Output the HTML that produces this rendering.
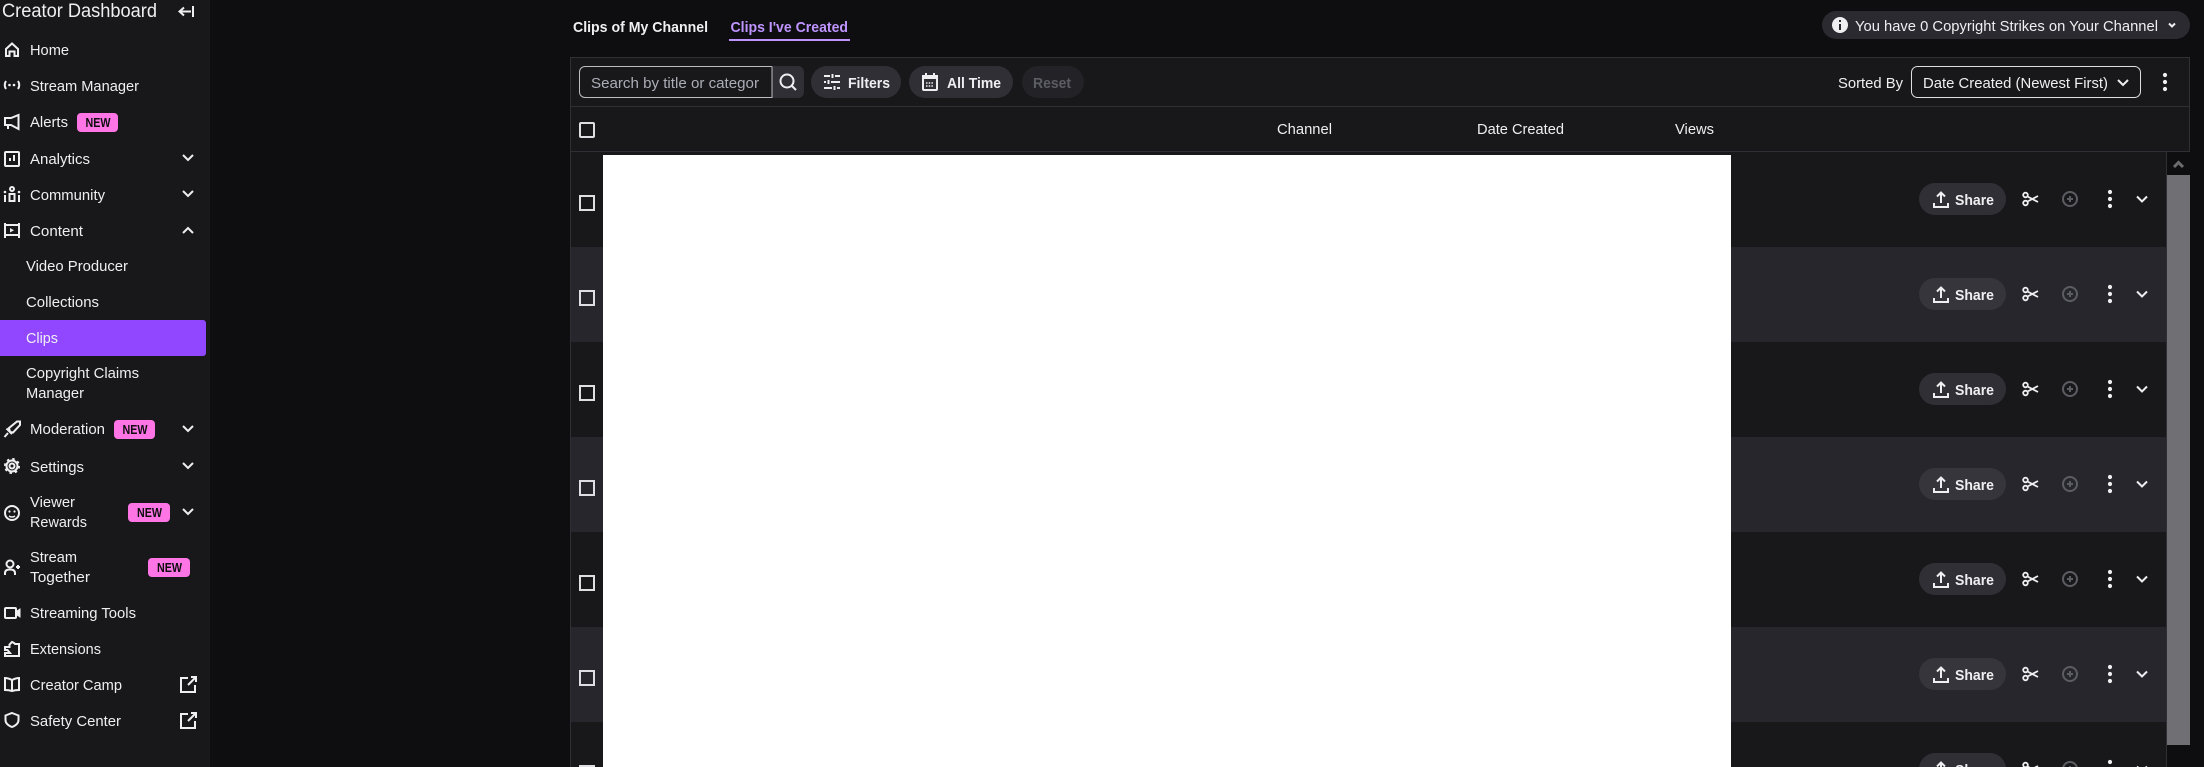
<!DOCTYPE html>
<html><head><meta charset="utf-8"><title>Creator Dashboard</title>
<style>
html,body{margin:0;padding:0;background:#0e0e10;width:2204px;height:767px;overflow:hidden}
svg{display:block}
text{font-family:"Liberation Sans",sans-serif;font-size:15px;fill:#efeff1}
.b{font-weight:700}
.n{font-size:12.5px;font-weight:700;fill:#0e0e10}
.i{fill:none;stroke:#efeff1;stroke-width:2}
.f{fill:#efeff1}
</style></head><body>
<svg width="2204" height="767" viewBox="0 0 2204 767" xmlns="http://www.w3.org/2000/svg">
<defs>
<path id="cd" d="M-5 -3L0 2L5 -3" fill="none" stroke="#efeff1" stroke-width="2"/>
<g id="ext" fill="none" stroke="#efeff1" stroke-width="2"><path d="M8 2H1V16H15V9"/><path d="M8 9L16 1M11 1H16V6"/></g>
<g id="acts">
<path d="M1934 203V207H1948V203" fill="none" stroke="#efeff1" stroke-width="2"/>
<path d="M1941 203V193M1937 196.500L1941 192.500L1945 196.500" fill="none" stroke="#efeff1" stroke-width="2"/>
<g fill="none" stroke="#efeff1" stroke-width="1.800"><circle cx="2025.500" cy="195" r="2.300"/><circle cx="2025.500" cy="203" r="2.300"/><path d="M2027.500 196.500L2038 202M2027.500 201.500L2038 196"/></g>
<circle cx="2070" cy="199" r="7" fill="none" stroke="#5c5c63" stroke-width="2"/><path d="M2070 196V202M2067 199H2073" stroke="#5c5c63" stroke-width="2"/>
<circle cx="2110" cy="192" r="2.100" fill="#efeff1"/><circle cx="2110" cy="199" r="2.100" fill="#efeff1"/><circle cx="2110" cy="206" r="2.100" fill="#efeff1"/>
<path d="M2137 196.500L2142 201.500L2147 196.500" fill="none" stroke="#efeff1" stroke-width="2"/>
</g>
</defs>

<rect width="2204" height="767" fill="#0e0e10"/>
<!-- sidebar -->
<rect width="210" height="767" fill="#18181b"/>
<text x="2" y="17" style="font-size:19px" textLength="155" lengthAdjust="spacingAndGlyphs">Creator Dashboard</text>
<path d="M191 11.500H180M184 7.500L179.500 11.500L184 15.500" class="i"/><path d="M193 6V17" class="i"/>

<path d="M6 56V49L12 43.500L18 49V56H14.500V51.500H9.500V56Z" class="i"/>
<text x="30" y="55" textLength="39" lengthAdjust="spacingAndGlyphs">Home</text>
<path d="M6 81Q3.500 85 6 89M18 81Q20.500 85 18 89" class="i"/>
<circle cx="9.500" cy="85" r="1.300" class="f"/><circle cx="14" cy="85" r="1.300" class="f"/>
<text x="30" y="91" textLength="109" lengthAdjust="spacingAndGlyphs">Stream Manager</text>
<path d="M5 118H11L18.500 115V129L11 125H5Z" class="i"/><path d="M8 125V129" class="i"/>
<text x="30" y="127" textLength="38" lengthAdjust="spacingAndGlyphs">Alerts</text>
<rect x="77" y="113" width="41" height="19" rx="4" fill="#ff75e6"/><text x="85.500" y="127" class="n" textLength="25" lengthAdjust="spacingAndGlyphs">NEW</text>

<rect x="5" y="152" width="14" height="14" rx="1" class="i"/><path d="M10 161V158M14 161V155" class="i"/>
<text x="30" y="164" textLength="60" lengthAdjust="spacingAndGlyphs">Analytics</text>
<use href="#cd" x="188" y="158"/>
<circle cx="12" cy="189" r="2" class="i"/><path d="M9.500 201V194H14.500V201ZM5 202V195M19 202V195" class="i"/><circle cx="5" cy="192" r="1.300" class="f"/><circle cx="19" cy="192" r="1.300" class="f"/>
<text x="30" y="200" textLength="75" lengthAdjust="spacingAndGlyphs">Community</text>
<use href="#cd" x="188" y="194"/>
<path d="M5 223V238M19 223V238M5 225H19M5 235H19" class="i"/><path d="M10 228V232.500L14 230.200Z" class="f"/>
<text x="30" y="236" textLength="53" lengthAdjust="spacingAndGlyphs">Content</text>
<path d="M183 233L188 228L193 233" class="i"/>

<text x="26" y="271" textLength="102" lengthAdjust="spacingAndGlyphs">Video Producer</text>
<text x="26" y="307" textLength="73" lengthAdjust="spacingAndGlyphs">Collections</text>
<path d="M0 320H203a3 3 0 0 1 3 3V353a3 3 0 0 1-3 3H0Z" fill="#9147ff"/>
<text x="26" y="343" textLength="32" lengthAdjust="spacingAndGlyphs">Clips</text>
<text x="26" y="378" textLength="113" lengthAdjust="spacingAndGlyphs">Copyright Claims</text>
<text x="26" y="398" textLength="58" lengthAdjust="spacingAndGlyphs">Manager</text>

<path d="M10 432L9 428L17 421.500H20V425L13 432.500ZM6.500 428.500L12 434M8 433L4.500 437" class="i" stroke-width="1.800"/>
<text x="30" y="434" textLength="75" lengthAdjust="spacingAndGlyphs">Moderation</text>
<rect x="114" y="420" width="41" height="19" rx="4" fill="#ff75e6"/><text x="122.500" y="434" class="n" textLength="25" lengthAdjust="spacingAndGlyphs">NEW</text>
<use href="#cd" x="188" y="429"/>
<circle cx="12" cy="466" r="5.500" class="i"/><circle cx="12" cy="466" r="7" fill="none" stroke="#efeff1" stroke-width="2" stroke-dasharray="2.500 3"/><circle cx="12" cy="466" r="2.500" class="i"/>
<text x="30" y="472" textLength="54" lengthAdjust="spacingAndGlyphs">Settings</text>
<use href="#cd" x="188" y="466"/>
<circle cx="12" cy="513" r="7" class="i"/><circle cx="9.500" cy="511.500" r="1.100" class="f"/><circle cx="14.500" cy="511.500" r="1.100" class="f"/><path d="M9 516Q12 518 15 516" fill="none" stroke="#efeff1" stroke-width="1.500"/>
<text x="30" y="507" textLength="45" lengthAdjust="spacingAndGlyphs">Viewer</text>
<text x="30" y="527" textLength="57" lengthAdjust="spacingAndGlyphs">Rewards</text>
<rect x="128" y="503" width="42" height="19" rx="4" fill="#ff75e6"/><text x="137" y="517" class="n" textLength="25" lengthAdjust="spacingAndGlyphs">NEW</text>
<use href="#cd" x="188" y="512"/>
<circle cx="10" cy="564" r="3.500" class="i"/><path d="M5 575V573Q5 569.500 10 569.500Q15 569.500 15 573V575" class="i"/><path d="M16 567H20M18 565V569" class="i"/>
<text x="30" y="562" textLength="47" lengthAdjust="spacingAndGlyphs">Stream</text>
<text x="30" y="582" textLength="60" lengthAdjust="spacingAndGlyphs">Together</text>
<rect x="148" y="558" width="42" height="19" rx="4" fill="#ff75e6"/><text x="157" y="572" class="n" textLength="25" lengthAdjust="spacingAndGlyphs">NEW</text>
<rect x="5" y="608" width="11" height="10" rx="1" class="i"/><path d="M17 611L20 609V617L17 615Z" class="f" stroke="#efeff1"/>
<text x="30" y="618" textLength="106" lengthAdjust="spacingAndGlyphs">Streaming Tools</text>
<path d="M5 647H9.500V644.500L12 642L14 643L15 644H19V656H5V653H10L7.500 650H5Z" class="i"/>
<text x="30" y="654" textLength="71" lengthAdjust="spacingAndGlyphs">Extensions</text>
<path d="M12 680Q8 678 5 678V690Q9 690 12 691Q15 690 19 690V678Q16 678 12 680ZM12 680V691" class="i"/>
<text x="30" y="690" textLength="92" lengthAdjust="spacingAndGlyphs">Creator Camp</text>
<use href="#ext" x="180" y="676"/>
<path d="M12 713L18.500 715.500V720Q18.500 724.500 12 727Q5.500 724.500 5.500 720V715.500Z" class="i"/>
<text x="30" y="726" textLength="91" lengthAdjust="spacingAndGlyphs">Safety Center</text>
<use href="#ext" x="180" y="712"/>

<!-- tabs -->
<text x="573" y="32" class="b" textLength="135" lengthAdjust="spacingAndGlyphs">Clips of My Channel</text>
<text x="730.500" y="32" class="b" style="fill:#bf94ff" textLength="117.500" lengthAdjust="spacingAndGlyphs">Clips I've Created</text>
<rect x="729" y="39" width="121" height="2" fill="#bf94ff"/>

<!-- strike pill -->
<rect x="1822" y="11" width="368" height="28" rx="14" fill="#2a2a30"/>
<circle cx="1840" cy="25" r="8" fill="#efeff1"/><rect x="1839" y="24" width="2" height="6" fill="#26262c"/><rect x="1839" y="20" width="2" height="2" fill="#26262c"/>
<text x="1855" y="31" textLength="303" lengthAdjust="spacingAndGlyphs">You have 0 Copyright Strikes on Your Channel</text>
<path d="M2169 23.500L2172 26.500L2175 23.500" fill="none" stroke="#efeff1" stroke-width="2"/>

<!-- toolbar + header -->
<rect x="570.500" y="57.500" width="1619" height="94" fill="#18181b" stroke="#2f2f35"/>
<rect x="570" y="106" width="1620" height="1" fill="#2f2f35"/>
<path d="M772 66H798a6 6 0 0 1 6 6V92a6 6 0 0 1-6 6H772Z" fill="#2f2f35"/>
<path d="M772 66.500H585a5.500 5.500 0 0 0-5.500 5.500V92a5.500 5.500 0 0 0 5.500 5.500H772V66.500" fill="#18181b" stroke="#bcbcc2" stroke-width="1"/>
<text x="591" y="88" style="fill:#adadb8" textLength="168" lengthAdjust="spacingAndGlyphs">Search by title or categor</text>
<circle cx="787" cy="81" r="6.500" class="i"/><path d="M791.500 85.500L796 90" class="i"/>
<rect x="811" y="66" width="90" height="32" rx="16" fill="#2f2f35"/>
<path d="M824 76H830M835 76H840M824 82H826M831 82H840M824 88H832M837 88H840" class="i"/><path d="M832.500 74V78M828.500 80V84M834.500 86V90" class="i"/>
<text x="848" y="88" class="b" textLength="42" lengthAdjust="spacingAndGlyphs">Filters</text>
<rect x="909" y="66" width="104" height="32" rx="16" fill="#2f2f35"/>
<rect x="923" y="76" width="14" height="14" rx="1" class="i"/><rect x="922" y="75" width="16" height="4" class="f"/><path d="M926 73V76M934 73V76" class="i"/><path d="M926 83H934M926 86H934" stroke="#efeff1" stroke-width="1.500" stroke-dasharray="1.500 1.200"/>
<text x="947" y="88" class="b" textLength="54" lengthAdjust="spacingAndGlyphs">All Time</text>
<rect x="1022" y="66" width="62" height="32" rx="16" fill="#232327"/>
<text x="1033" y="88" class="b" style="fill:#5c5c63" textLength="38" lengthAdjust="spacingAndGlyphs">Reset</text>

<text x="1838" y="88" textLength="65" lengthAdjust="spacingAndGlyphs">Sorted By</text>
<rect x="1911.500" y="66.500" width="229" height="31" rx="6" fill="#18181b" stroke="#dedee3"/>
<text x="1923" y="88" textLength="185" lengthAdjust="spacingAndGlyphs">Date Created (Newest First)</text>
<path d="M2118 80L2123 85L2128 80" class="i"/>
<circle cx="2165" cy="75" r="2.100" class="f"/><circle cx="2165" cy="82" r="2.100" class="f"/><circle cx="2165" cy="89" r="2.100" class="f"/>

<rect x="580" y="123" width="14" height="14" rx="1" fill="none" stroke="#dedee3" stroke-width="2"/>
<text x="1277" y="134" textLength="55" lengthAdjust="spacingAndGlyphs">Channel</text>
<text x="1477" y="134" textLength="87" lengthAdjust="spacingAndGlyphs">Date Created</text>
<text x="1675" y="134" textLength="39" lengthAdjust="spacingAndGlyphs">Views</text>

<!-- rows -->
<rect x="570" y="152" width="1596" height="95" fill="#18181b"/>
<rect x="570" y="247" width="1596" height="95" fill="#26262c"/>
<rect x="570" y="342" width="1596" height="95" fill="#18181b"/>
<rect x="570" y="437" width="1596" height="95" fill="#26262c"/>
<rect x="570" y="532" width="1596" height="95" fill="#18181b"/>
<rect x="570" y="627" width="1596" height="95" fill="#26262c"/>
<rect x="570" y="722" width="1596" height="45" fill="#18181b"/>
<rect x="570" y="152" width="1" height="615" fill="#2f2f35"/>
<rect x="2166" y="152" width="1" height="615" fill="#2f2f35"/>

<!-- scrollbar -->
<rect x="2167" y="152" width="23" height="23" fill="#0e0e10"/>
<path d="M2174 167L2178.500 162.500L2183 167" fill="none" stroke="#6b6b70" stroke-width="3"/>
<rect x="2167" y="175" width="23" height="570" fill="#6f6f74"/>

<!-- checkboxes -->
<g fill="none" stroke="#dedee3" stroke-width="2">
<rect x="580" y="196" width="14" height="14"/>
<rect x="580" y="291" width="14" height="14"/>
<rect x="580" y="386" width="14" height="14"/>
<rect x="580" y="481" width="14" height="14"/>
<rect x="580" y="576" width="14" height="14"/>
<rect x="580" y="671" width="14" height="14"/>
<rect x="580" y="766" width="14" height="14"/>
</g>

<!-- share pills -->
<g fill="#2f2f35">
<rect x="1919" y="183" width="87" height="32" rx="16"/>
<rect x="1919" y="278" width="87" height="32" rx="16" fill="#35353b"/>
<rect x="1919" y="373" width="87" height="32" rx="16"/>
<rect x="1919" y="468" width="87" height="32" rx="16" fill="#35353b"/>
<rect x="1919" y="563" width="87" height="32" rx="16"/>
<rect x="1919" y="658" width="87" height="32" rx="16" fill="#35353b"/>
<rect x="1919" y="753" width="87" height="32" rx="16"/>
</g>
<text x="1955" y="205" class="b" textLength="39" lengthAdjust="spacingAndGlyphs">Share</text>
<text x="1955" y="300" class="b" textLength="39" lengthAdjust="spacingAndGlyphs">Share</text>
<text x="1955" y="395" class="b" textLength="39" lengthAdjust="spacingAndGlyphs">Share</text>
<text x="1955" y="490" class="b" textLength="39" lengthAdjust="spacingAndGlyphs">Share</text>
<text x="1955" y="585" class="b" textLength="39" lengthAdjust="spacingAndGlyphs">Share</text>
<text x="1955" y="680" class="b" textLength="39" lengthAdjust="spacingAndGlyphs">Share</text>
<text x="1955" y="775" class="b" textLength="39" lengthAdjust="spacingAndGlyphs">Share</text>
<use href="#acts" y="0"/>
<use href="#acts" y="95"/>
<use href="#acts" y="190"/>
<use href="#acts" y="285"/>
<use href="#acts" y="380"/>
<use href="#acts" y="475"/>
<use href="#acts" y="570"/>

<!-- thumbnail area -->
<rect x="603" y="155" width="1128" height="612" fill="#ffffff"/>
</svg>
</body></html>
